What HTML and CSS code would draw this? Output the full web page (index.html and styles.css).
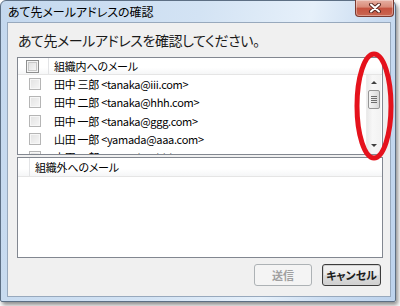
FILE: index.html
```html
<!DOCTYPE html>
<html>
  <head>
    <meta charset="utf-8">
    <title>あて先メールアドレスの確認</title>
    <link rel="stylesheet" href="styles.css">
  </head>
  <body>
    <div class="window">
      <div class="titlebar">
        <span class="title">あて先メールアドレスの確認</span>
        <div class="close-btn" title="閉じる">
          <svg width="14" height="10" viewBox="0 0 14 10">
            <path d="M3 1.5 L11 8.5 M11 1.5 L3 8.5" stroke="#5a2a24" stroke-width="4" stroke-linecap="round"/>
            <path d="M3 1.5 L11 8.5 M11 1.5 L3 8.5" stroke="#fff" stroke-width="2" stroke-linecap="round"/>
          </svg>
        </div>
      </div>

      <div class="client">
        <h1 class="instruction">あて先メールアドレスを確認してください。</h1>

        <!-- 組織内 -->
        <div class="listview inside">
          <div class="lv-header">
            <div class="lv-col check-col"><span class="check"></span></div>
            <div class="lv-col name-col">組織内へのメール</div>
          </div>
          <div class="lv-body">
            <ul class="lv-rows">
              <li class="lv-row"><span class="check light"></span><span class="addr">田中 三郎 &lt;tanaka@iii.com&gt;</span></li>
              <li class="lv-row"><span class="check light"></span><span class="addr">田中 二郎 &lt;tanaka@hhh.com&gt;</span></li>
              <li class="lv-row"><span class="check light"></span><span class="addr">田中 一郎 &lt;tanaka@ggg.com&gt;</span></li>
              <li class="lv-row"><span class="check light"></span><span class="addr">山田 一郎 &lt;yamada@aaa.com&gt;</span></li>
              <li class="lv-row"><span class="check light"></span><span class="addr">山田 二郎 &lt;yamada@bbb.com&gt;</span></li>
            </ul>
            <div class="scrollbar">
              <div class="sb-arrow up"></div>
              <div class="sb-track">
                <div class="sb-thumb"><span></span><span></span><span></span><span></span></div>
              </div>
              <div class="sb-arrow down"></div>
            </div>
          </div>
        </div>

        <!-- 組織外 -->
        <div class="listview outside">
          <div class="lv-header">
            <div class="lv-col blank-col"></div>
            <div class="lv-col name-col">組織外へのメール</div>
          </div>
          <div class="lv-body"></div>
        </div>

        <div class="buttons">
          <button class="btn" disabled>送信</button>
          <button class="btn default">キャンセル</button>
        </div>
      </div>
    </div>

    <!-- annotation drawn over the screenshot -->
    <svg class="annotation" width="400" height="306" viewBox="0 0 400 306">
      <ellipse cx="374" cy="106" rx="17" ry="52" fill="none" stroke="#e5121c" stroke-width="5"/>
    </svg>
  </body>
</html>
```

FILE: styles.css
```css
* {
  box-sizing: border-box;
}

html, body {
  margin: 0;
  height: 100%;
}

body {
  position: relative;
  background: #fff;
  font-family: "Noto Sans CJK JP", "Noto Sans", sans-serif;
  font-feature-settings: "palt";
  color: #000;
  overflow: hidden;
}

.window {
  width: 396px;
  height: 302px;
  border: 1px solid #5d6f84;
  border-radius: 6px 6px 2px 2px;
  background: linear-gradient(100deg, #c4d8ee 0%, #d3e3f4 45%, #e6f0fa 70%, #cadcf1 85%, #bcd2ec 100%);
  box-shadow: 2px 3px 4px rgba(0,0,0,.45);
  display: flex;
  flex-direction: column;
}

.titlebar {
  height: 21px;
  display: flex;
  justify-content: space-between;
  align-items: flex-start;
  padding-left: 7px;
}

.title {
  font-size: 12px;
  line-height: 21px;
  color: #000;
}

.close-btn {
  width: 39px;
  height: 17px;
  margin-top: -1px;
  margin-right: 1px;
  border: 1px solid #7b3a30;
  border-top: none;
  border-radius: 0 0 4px 4px;
  background: linear-gradient(#e6b0a3 0%, #d98a78 45%, #c5523f 50%, #c96752 100%);
  box-shadow: inset 0 0 0 1px rgba(255,255,255,.35);
  display: flex;
  align-items: center;
  justify-content: center;
}

.client {
  height: 275px;
  margin: 0 4px 0 6px;
  border: 1px solid #98a9bd;
  background: #f0f0f0;
  display: flex;
  flex-direction: column;
}

.instruction {
  margin: 0;
  padding: 8px 10px 0;
  height: 34px;
  font-size: 14px;
  letter-spacing: -0.4px;
  line-height: 18px;
  font-weight: normal;
  color: #1a1a1a;
}

.listview {
  margin: 0 7px 0 9px;
  border: 1px solid #828790;
  background: #fff;
  display: flex;
  flex-direction: column;
}

.listview.inside {
  height: 98px;
}

.listview.outside {
  height: 101px;
  margin-top: 2px;
}

.lv-header {
  display: flex;
  height: 17px;
  border-bottom: 1px solid #e5e5e5;
  background: linear-gradient(#fff 0%, #fff 60%, #f5f6f7 100%);
  font-size: 11px;
  letter-spacing: -0.2px;
  line-height: 16px;
  flex-shrink: 0;
}

.listview.outside .lv-header {
  height: 19px;
  line-height: 18px;
}

.lv-col {
  border-right: 1px solid #e3e4e6;
}

.check-col {
  width: 31px;
  display: flex;
  align-items: center;
  padding-left: 8px;
}

.blank-col {
  width: 12px;
}

.name-col {
  flex: 1;
  border-right: none;
  padding-left: 5px;
}

.check {
  display: inline-block;
  width: 13px;
  height: 13px;
  border: 1px solid #8e8f8f;
  background: linear-gradient(135deg, #dcdcdc, #fbfbfb);
  box-shadow: inset 0 0 0 1px #f4f4f4, inset 0 0 0 2px #c8c8c8;
}

.check.light {
  width: 12px;
  height: 12px;
  border-color: #b5b5b5;
  background: linear-gradient(135deg, #e2e2e2, #f6f6f6);
  box-shadow: inset 0 0 0 1px #f7f7f7;
}

.lv-body {
  flex: 1;
  display: flex;
  overflow: hidden;
}

.lv-rows {
  flex: 1;
  margin: 0;
  padding: 0;
  list-style: none;
  overflow: hidden;
}

.lv-row {
  height: 18.3px;
  display: flex;
  align-items: center;
  padding-left: 11px;
  font-size: 11px;
  letter-spacing: -0.3px;
  white-space: nowrap;
}

.addr {
  margin-left: 13px;
}

.scrollbar {
  width: 15px;
  margin-right: 1px;
  display: flex;
  flex-direction: column;
  border-left: 1px solid #ececec;
  background: linear-gradient(90deg, #e9e9e9, #f7f7f7 40%, #f2f2f2);
}

.sb-arrow {
  height: 15px;
  position: relative;
}

.sb-arrow::after {
  content: "";
  position: absolute;
  left: 4px;
  top: 6px;
  border-left: 3px solid transparent;
  border-right: 3px solid transparent;
}

.sb-arrow.up::after {
  border-bottom: 3px solid #404040;
}

.sb-arrow.down::after {
  top: 5px;
  border-top: 3px solid #404040;
}

.sb-track {
  flex: 1;
}

.sb-thumb {
  width: 12px;
  height: 19px;
  margin: 0 0 0 1px;
  border: 1px solid #959595;
  border-radius: 2px;
  background: linear-gradient(90deg, #f4f4f4, #e8e8e8 50%, #d8d8d8);
  display: flex;
  flex-direction: column;
  align-items: center;
  justify-content: center;
  gap: 1px;
}

.sb-thumb span {
  display: block;
  width: 6px;
  height: 1px;
  background: #6e6e6e;
}

.buttons {
  display: flex;
  justify-content: flex-end;
  gap: 10px;
  padding: 6px 9px 0 0;
}

.btn {
  height: 22px;
  width: 58px;
  padding: 0;
  border: 1px solid #707070;
  border-radius: 3px;
  background: linear-gradient(#f2f2f2 0%, #ebebeb 50%, #dddddd 51%, #cfcfcf 100%);
  box-shadow: inset 0 0 0 1px #fbfbfb;
  font-family: inherit;
  font-feature-settings: "palt";
  font-size: 11px;
  font-weight: bold;
  color: #1a1a1a;
}

.btn.default {
  width: 59px;
  border-color: #3c3c3c;
  box-shadow: inset 0 0 0 1px #d2d2d2;
}

.btn:disabled {
  border-color: #adb2b5;
  background: #f4f4f4;
  box-shadow: none;
  color: #a0a0a0;
}

.annotation {
  position: absolute;
  top: 0;
  left: 0;
  pointer-events: none;
}
```
